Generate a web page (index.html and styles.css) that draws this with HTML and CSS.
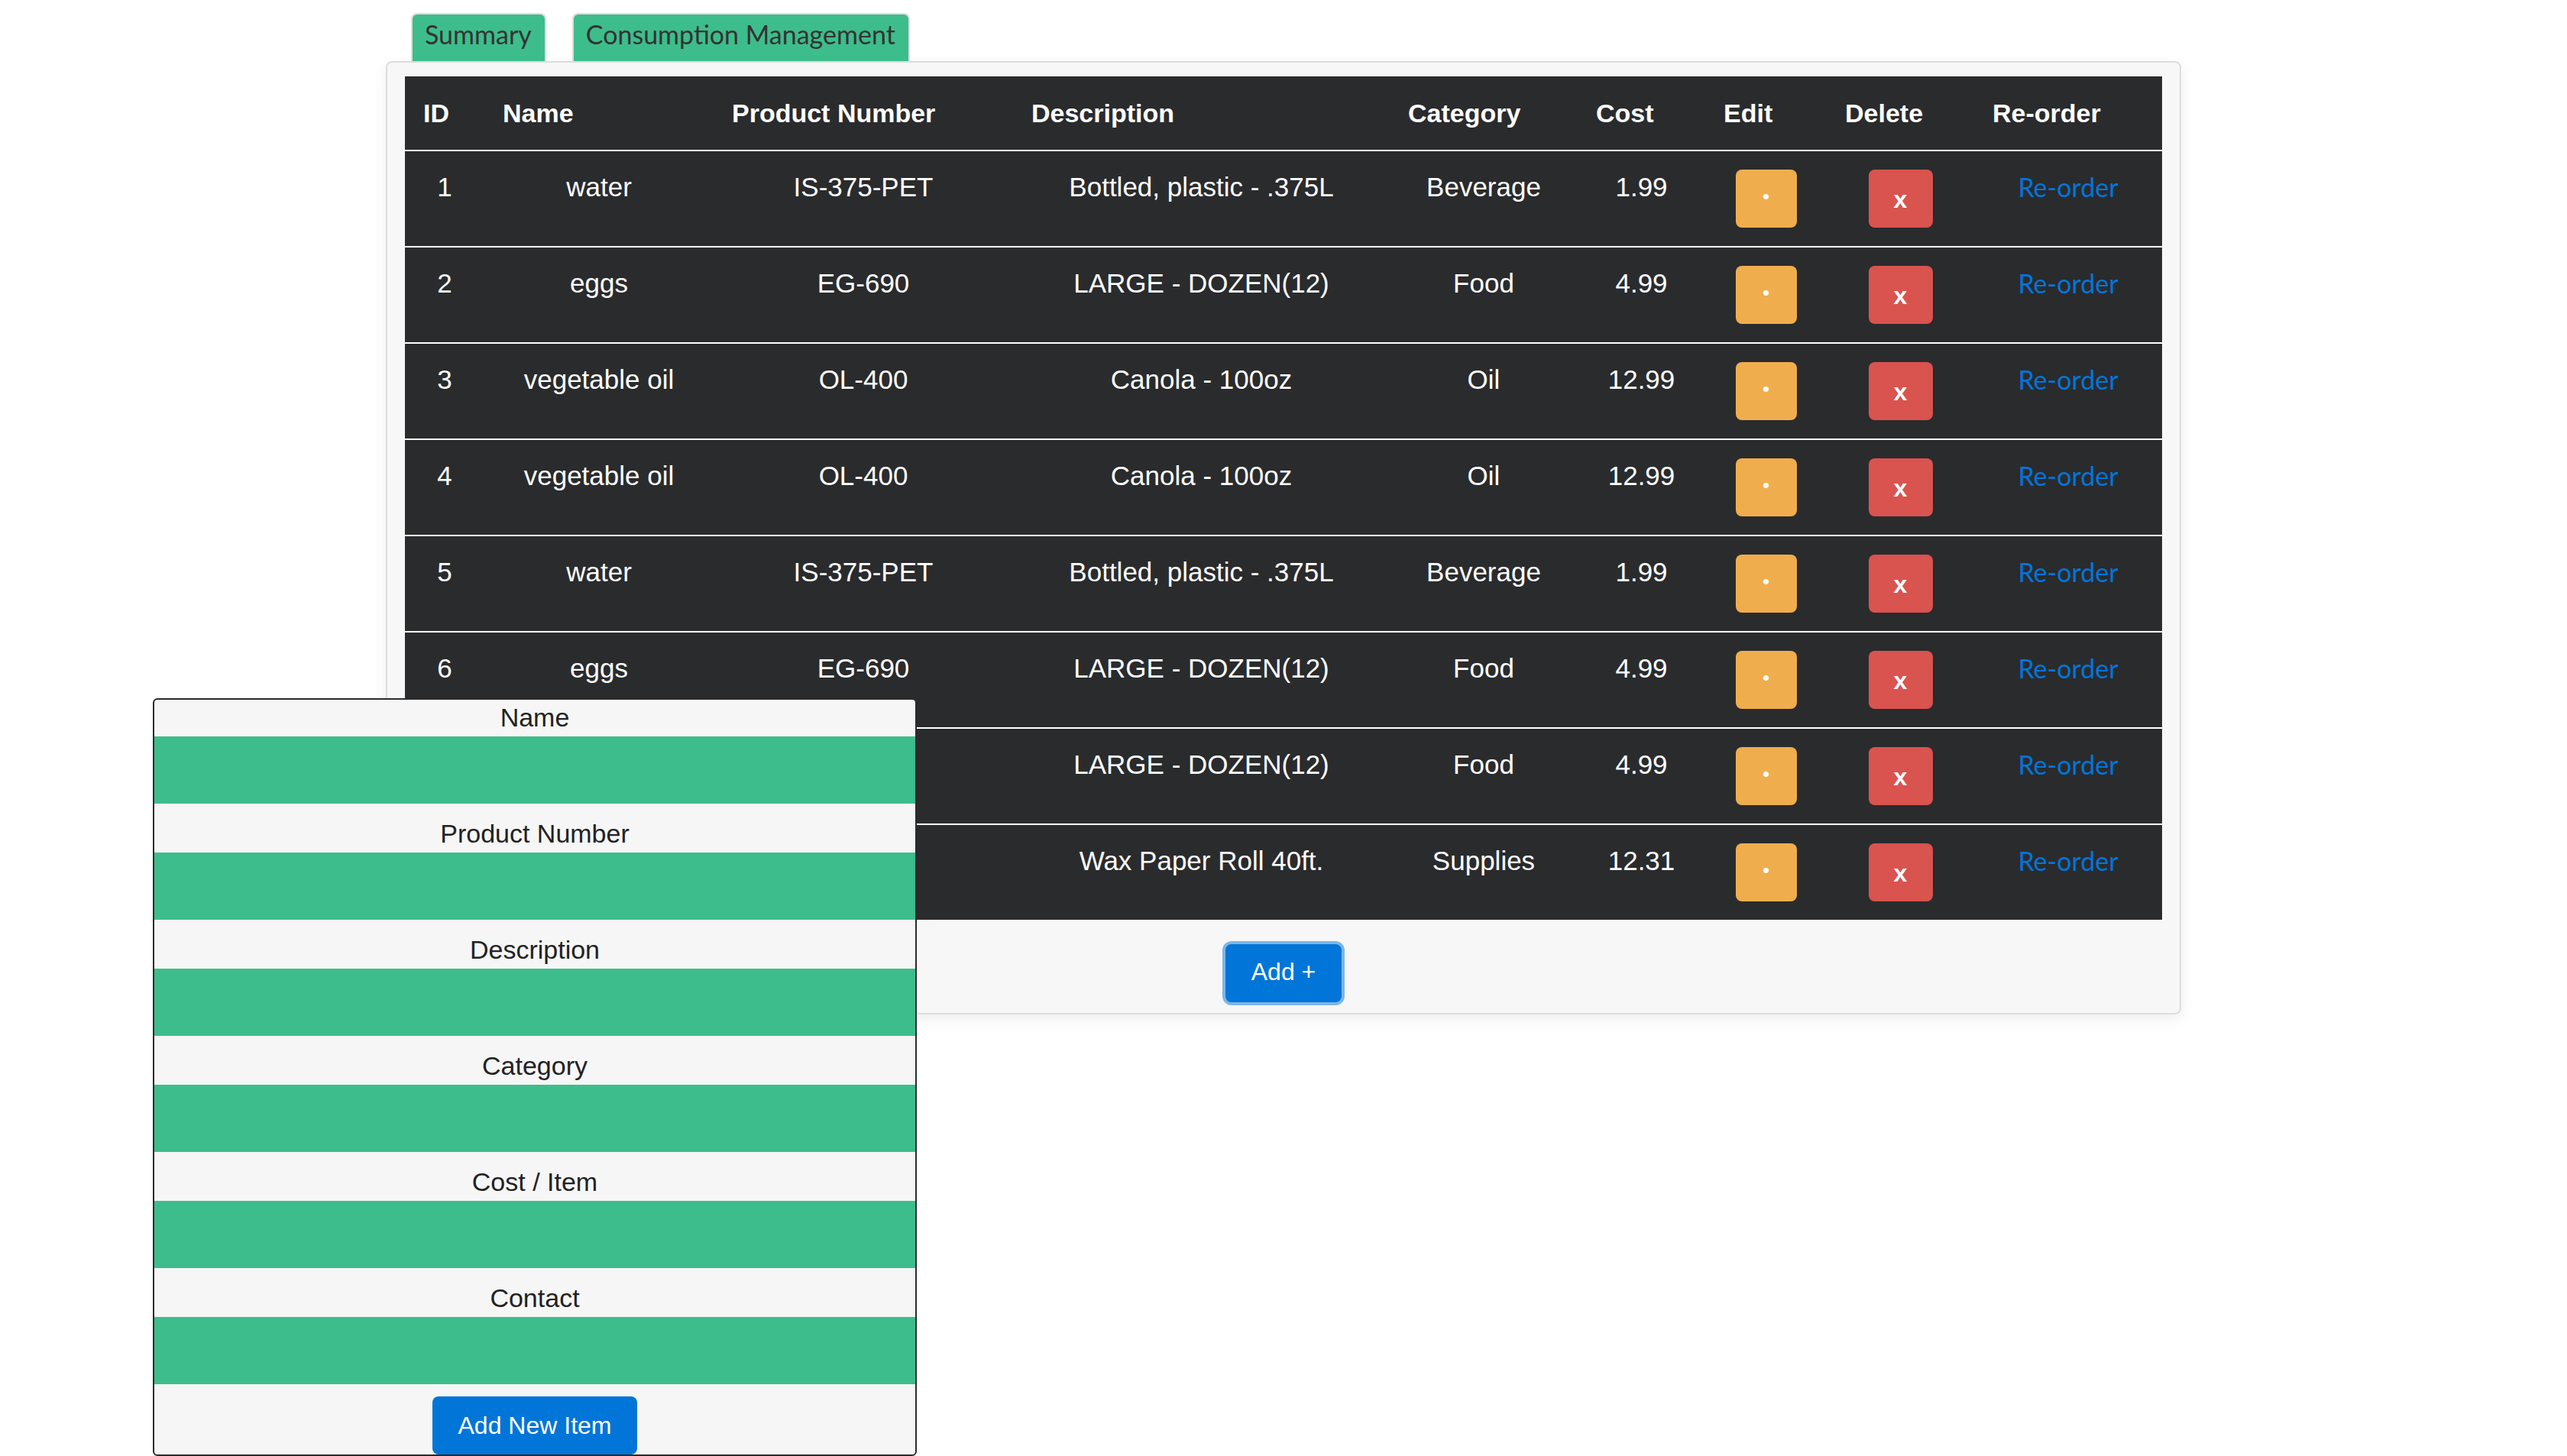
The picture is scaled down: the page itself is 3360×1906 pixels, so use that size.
FILE: index.html
```html
<!DOCTYPE html>
<html lang="en">
<head>
<meta charset="utf-8">
<title>Consumption Management</title>
<link rel="stylesheet" href="styles.css">
</head>
<body>
<div class="page">
  <nav class="tabs">
    <a class="tab" href="#">Summary</a>
    <a class="tab" href="#">Consumption Management</a>
  </nav>
  <section class="panel">
    <table class="inventory">
      <colgroup>
        <col class="c-id"><col class="c-name"><col class="c-pn"><col class="c-desc"><col class="c-cat"><col class="c-cost"><col class="c-edit"><col class="c-del"><col class="c-re">
      </colgroup>
      <thead>
        <tr><th>ID</th><th>Name</th><th>Product Number</th><th>Description</th><th>Category</th><th>Cost</th><th>Edit</th><th>Delete</th><th>Re-order</th></tr>
      </thead>
      <tbody>
        <tr><td>1</td><td>water</td><td>IS-375-PET</td><td>Bottled, plastic - .375L</td><td>Beverage</td><td>1.99</td><td><button class="btn-edit">•</button></td><td><button class="btn-del">x</button></td><td><a class="reorder" href="#">Re-order</a></td></tr>
        <tr><td>2</td><td>eggs</td><td>EG-690</td><td>LARGE - DOZEN(12)</td><td>Food</td><td>4.99</td><td><button class="btn-edit">•</button></td><td><button class="btn-del">x</button></td><td><a class="reorder" href="#">Re-order</a></td></tr>
        <tr><td>3</td><td>vegetable oil</td><td>OL-400</td><td>Canola - 100oz</td><td>Oil</td><td>12.99</td><td><button class="btn-edit">•</button></td><td><button class="btn-del">x</button></td><td><a class="reorder" href="#">Re-order</a></td></tr>
        <tr><td>4</td><td>vegetable oil</td><td>OL-400</td><td>Canola - 100oz</td><td>Oil</td><td>12.99</td><td><button class="btn-edit">•</button></td><td><button class="btn-del">x</button></td><td><a class="reorder" href="#">Re-order</a></td></tr>
        <tr><td>5</td><td>water</td><td>IS-375-PET</td><td>Bottled, plastic - .375L</td><td>Beverage</td><td>1.99</td><td><button class="btn-edit">•</button></td><td><button class="btn-del">x</button></td><td><a class="reorder" href="#">Re-order</a></td></tr>
        <tr><td>6</td><td>eggs</td><td>EG-690</td><td>LARGE - DOZEN(12)</td><td>Food</td><td>4.99</td><td><button class="btn-edit">•</button></td><td><button class="btn-del">x</button></td><td><a class="reorder" href="#">Re-order</a></td></tr>
        <tr><td>7</td><td>eggs</td><td>EG-690</td><td>LARGE - DOZEN(12)</td><td>Food</td><td>4.99</td><td><button class="btn-edit">•</button></td><td><button class="btn-del">x</button></td><td><a class="reorder" href="#">Re-order</a></td></tr>
        <tr><td>8</td><td>wax paper</td><td>WP-40</td><td>Wax Paper Roll 40ft.</td><td>Supplies</td><td>12.31</td><td><button class="btn-edit">•</button></td><td><button class="btn-del">x</button></td><td><a class="reorder" href="#">Re-order</a></td></tr>
      </tbody>
    </table>
    <div class="actions"><button class="btn-add">Add +</button></div>
  </section>
</div>
<form class="new-item">
  <label class="field-label">Name</label>
  <input class="field-input" type="text">
  <label class="field-label">Product Number</label>
  <input class="field-input" type="text">
  <label class="field-label">Description</label>
  <input class="field-input" type="text">
  <label class="field-label">Category</label>
  <input class="field-input" type="text">
  <label class="field-label">Cost / Item</label>
  <input class="field-input" type="text">
  <label class="field-label">Contact</label>
  <input class="field-input" type="text">
  <button class="btn-submit" type="button">Add New Item</button>
</form>
</body>
</html>
```
FILE: styles.css
```css
html, body {
  margin: 0;
  padding: 0;
}
body {
  position: relative;
  height: 1906px;
  overflow: hidden;
  background: #ffffff;
  font-family: "Liberation Sans", Arial, sans-serif;
  color: #212529;
}
.page {
  width: 2350px;
  margin: 0 auto;
  padding-top: 17px;
}
.tabs {
  display: flex;
  gap: 34px;
  padding-left: 33px;
}
.tab {
  display: block;
  box-sizing: border-box;
  height: 63px;
  padding: 0 17px 0 16px;
  border: 2px solid #dcdcdc;
  border-bottom: 0;
  border-radius: 8px 8px 0 0;
  background: #3dbd8c;
  color: #333333;
  font-family: Lato, "Open Sans", sans-serif;
  font-size: 34px;
  line-height: 52px;
  text-decoration: none;
}
.panel {
  box-sizing: border-box;
  border: 2px solid #dddddd;
  border-radius: 8px;
  background: #f7f7f7;
  padding: 18px 23px 14px;
  box-shadow: 0 6px 18px rgba(0, 0, 0, 0.07);
}
.inventory {
  width: 100%;
  table-layout: fixed;
  border-spacing: 0;
  background: #2a2b2d;
  color: #ffffff;
}
.c-id { width: 104px; }
.c-name { width: 300px; }
.c-pn { width: 392px; }
.c-desc { width: 493px; }
.c-cat { width: 246px; }
.c-cost { width: 167px; }
.c-edit { width: 159px; }
.c-del { width: 193px; }
.c-re { width: 246px; }
.inventory th {
  padding: 24px;
  text-align: left;
  font-weight: 700;
  font-size: 34px;
  line-height: 48px;
  white-space: nowrap;
}
.inventory td {
  padding: 24px 0;
  border-top: 2px solid #ffffff;
  text-align: center;
  vertical-align: top;
  font-size: 35px;
  line-height: 46px;
  white-space: nowrap;
}
.btn-edit,
.btn-del {
  display: inline-flex;
  align-items: center;
  justify-content: center;
  box-sizing: border-box;
  height: 76px;
  padding: 0;
  border: 0;
  border-radius: 8px;
  color: #ffffff;
  vertical-align: top;
  font-family: "Liberation Sans", Arial, sans-serif;
}
.btn-edit {
  width: 80px;
  background: #f0ad4e;
  font-size: 26px;
  padding-bottom: 6px;
}
.btn-del {
  width: 84px;
  background: #d9534f;
  font-size: 32px;
  font-weight: 700;
  padding-top: 2px;
}
.reorder {
  color: #0275d8;
  font-family: Lato, "Open Sans", sans-serif;
  font-size: 34px;
  text-decoration: none;
}
.actions {
  padding-top: 32px;
  text-align: center;
}
.btn-add {
  display: inline-block;
  box-sizing: border-box;
  height: 76px;
  padding: 0 34px 4px;
  border: 0;
  border-radius: 8px;
  background: #0275d8;
  color: #ffffff;
  font-family: "Liberation Sans", Arial, sans-serif;
  font-size: 32px;
  box-shadow: 0 0 0 4px rgba(2, 117, 216, 0.5);
  vertical-align: top;
}
.new-item {
  position: absolute;
  left: 200px;
  top: 914px;
  width: 1000px;
  box-sizing: border-box;
  margin: 0;
  border: 2px solid #2b2b2b;
  border-radius: 6px;
  background: #f6f6f6;
  text-align: center;
}
.field-label {
  display: block;
  height: 48px;
  font-size: 34px;
  line-height: 46px;
  color: #222222;
}
.field-input {
  display: block;
  box-sizing: border-box;
  width: 100%;
  height: 88px;
  margin: 0 0 16px;
  padding: 0;
  border: 0;
  background: #3dbd8c;
}
.btn-submit {
  display: block;
  box-sizing: border-box;
  height: 76px;
  margin: 0 auto;
  padding: 0 34px;
  border: 0;
  border-radius: 8px;
  background: #0275d8;
  color: #ffffff;
  font-family: "Liberation Sans", Arial, sans-serif;
  font-size: 32px;
}
```
